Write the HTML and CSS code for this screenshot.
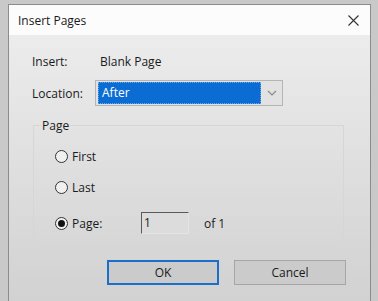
FILE: index.html
```html
<!DOCTYPE html>
<html lang="en">
<head>
  <meta charset="UTF-8" />
  <title>Insert Pages</title>
  <link rel="stylesheet" href="styles.css">
</head>
<body>
  <div class="dialog">
    <div class="titlebar">
      <span class="title">Insert Pages</span>
      <svg class="close" width="11" height="11" viewBox="0 0 11 11">
        <path d="M0.5 0.5 L10.5 10.5 M10.5 0.5 L0.5 10.5" stroke="#333" stroke-width="1.1" fill="none" />
      </svg>
    </div>

    <div class="content">
      <div class="row insert-row">
        <span class="label">Insert:</span>
        <span class="value">Blank Page</span>
      </div>

      <div class="row location-row">
        <span class="label">Location:</span>
        <div class="select">
          <span class="selected">After</span>
          <span class="arrow">
            <svg width="10" height="6" viewBox="0 0 10 6">
              <path d="M1 1 L5 5 L9 1" stroke="#8a8a8a" stroke-width="1.2" fill="none" />
            </svg>
          </span>
        </div>
      </div>

      <fieldset class="group">
        <legend>Page</legend>
        <div class="radio-row first">
          <span class="radio"></span>
          <span>First</span>
        </div>
        <div class="radio-row last">
          <span class="radio"></span>
          <span>Last</span>
        </div>
        <div class="radio-row page">
          <span class="radio checked"></span>
          <span class="page-label">Page:</span>
          <span class="page-input">1</span>
          <span class="of">of 1</span>
        </div>
      </fieldset>

      <div class="buttons">
        <button class="btn default">OK</button>
        <button class="btn">Cancel</button>
      </div>
    </div>
  </div>
</body>
</html>
```

FILE: styles.css
```css
body {
  margin: 0;
  background: #c9c9c9;
  font-family: "Open Sans", "Noto Sans", sans-serif;
  font-size: 12px;
  color: #1a1a1a;
  overflow: hidden;
}

.dialog {
  margin: 4px 0 0 8px;
  width: 361px;
  height: 310px;
  border: 1px solid #8c8c8c;
  border-bottom: none;
  background: linear-gradient(#ececec 10%, #d0d0d0 100%);
}

.titlebar {
  height: 30px;
  background: #fcfcfc;
  display: flex;
  align-items: center;
  justify-content: space-between;
  padding: 0 11px 0 9px;
}
.title { font-size: 12px; }

.content { padding: 16px 0 0 23px; }

.row {
  display: flex;
  align-items: center;
  height: 20px;
}
.label { width: 63px; }
.value { padding-left: 5px; }

.location-row { margin-top: 10px; height: 24px; }
.select {
  display: flex;
  width: 184px;
  height: 22px;
  border: 1px solid #b5b5b5;
  background: #e2e2e2;
  padding: 1px 0 1px 2px;
}
.selected {
  flex: 1;
  background: #0b6dd3;
  color: #fff;
  padding-left: 3px;
  line-height: 20px;
  border: 1px dotted #6aa8e8;
}
.arrow {
  width: 21px;
  display: flex;
  align-items: center;
  justify-content: center;
}

.group {
  margin: 12px 0 0 1px;
  width: 311px;
  border: 1px solid #d6d6d6;
  padding: 12px 0 11px 21px;
  box-sizing: border-box;
}
.group legend {
  padding: 0 1px;
  margin-left: -14px;
  line-height: 17px;
}

.radio-row {
  display: flex;
  align-items: center;
  height: 20px;
  gap: 4px;
}
.last { margin-top: 11px; }
.page { margin-top: 15px; height: 22px; }

.radio {
  width: 11px;
  height: 11px;
  border: 1px solid #333;
  border-radius: 50%;
  background: #f0f0f0;
  display: flex;
  align-items: center;
  justify-content: center;
}
.radio.checked::after {
  content: "";
  width: 7px;
  height: 7px;
  border-radius: 50%;
  background: #111;
}

.page-label { width: 65px; }
.page-input {
  width: 44px;
  height: 20px;
  border: 1px solid #e4e4e4;
  border-top-color: #5a5a5a;
  border-left-color: #5a5a5a;
  background: #dcdcdc;
  padding-left: 2px;
  line-height: 20px;
}
.of { margin-left: 11px; }

.buttons {
  display: flex;
  gap: 15px;
  margin: 14px 0 0 75px;
}
.btn {
  width: 112px;
  height: 25px;
  font: inherit;
  color: #1a1a1a;
  background: #cbcbcb;
  border: 1px solid #a6a6a6;
  padding: 0;
}
.btn.default { border: 2px solid #1b6fc8; }
```
